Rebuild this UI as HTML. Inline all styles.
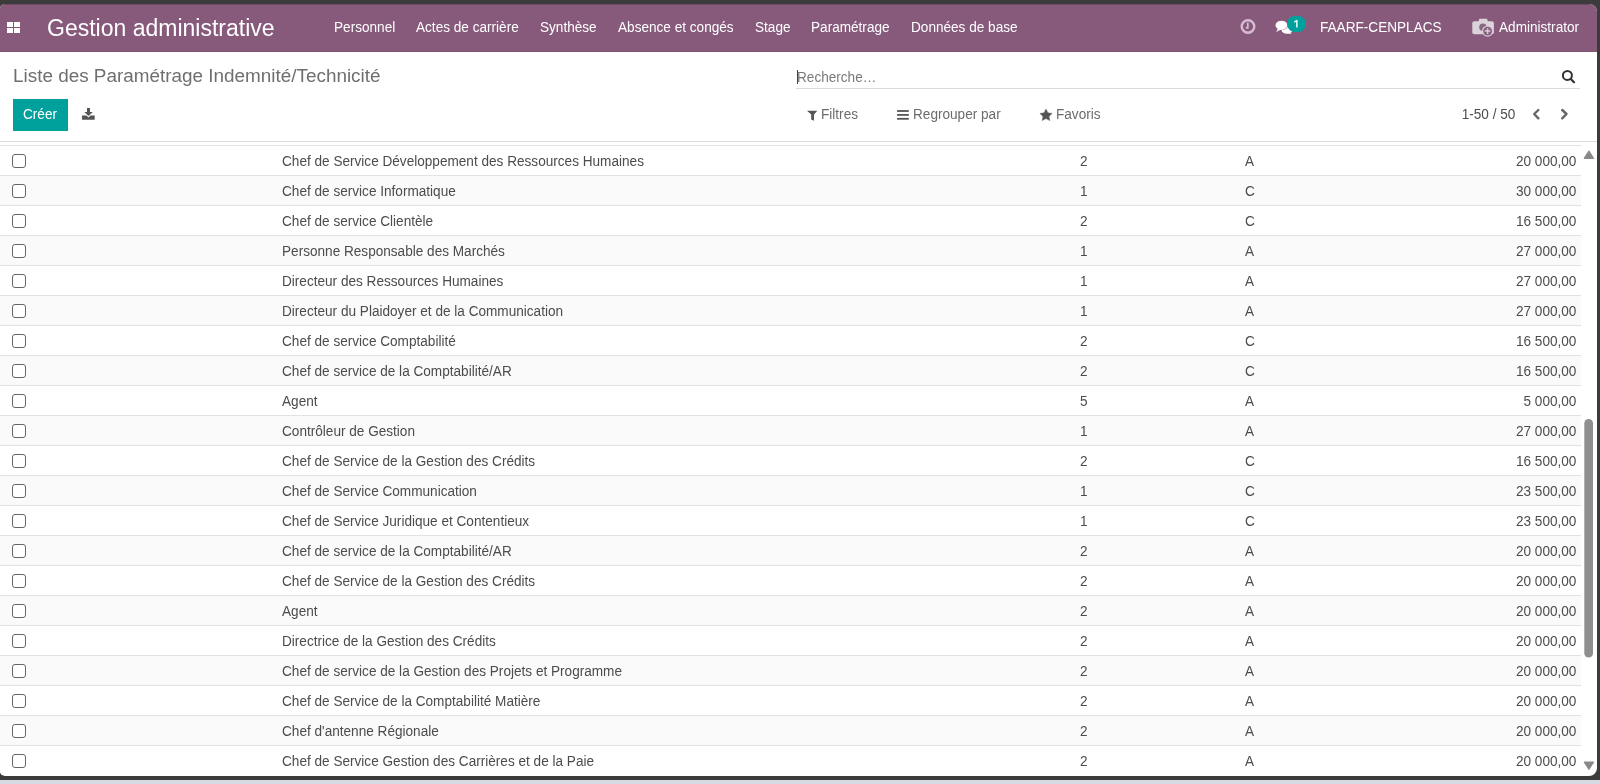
<!DOCTYPE html>
<html><head><meta charset="utf-8">
<style>
*{box-sizing:border-box}
html,body{margin:0;padding:0}
body{width:1600px;height:784px;overflow:hidden;position:relative;background:#d6d9e1;font-family:"Liberation Sans",sans-serif;}
#frame{position:absolute;left:0;top:0;width:1600px;height:780px;background:#3c3b3c}
#win{will-change:transform;position:absolute;left:0;top:4px;width:1597px;height:772px;background:#fff;border-radius:5px 8px 8px 5px;overflow:hidden}
#nav{position:absolute;left:0;top:0;width:1597px;height:48px;background:#875a7b;border-bottom:1px solid #7e5673;box-shadow:inset 0 1px 0 rgba(50,35,48,0.3)}
.t{position:absolute;white-space:nowrap;line-height:1}
.sy{transform:scaleY(1.08);transform-origin:0 7px}
.nv{color:#fff;font-size:13.6px;top:16.5px;transform:scaleY(1.08);transform-origin:0 7px}
#cp{position:absolute;left:0;top:48px;width:1597px;height:90px;border-bottom:1px solid #dcdcdc}
.rows{position:absolute;left:0;width:1581px}
.c.r{right:4.6px}
.row{position:absolute;left:0;width:1581px;height:30px;border-top:1px solid #e2e2e2}
.row.odd{background:#fff}
.row.even{background:#fafafa}
.cb{position:absolute;left:12px;top:8px;width:14px;height:14px;border:1.6px solid #666;border-radius:3px;background:#fff}
.c{position:absolute;font-size:13.6px;color:#4c4c4c;white-space:nowrap;line-height:1;top:8px;transform:scaleY(1.08);transform-origin:0 3px}
</style></head><body>
<div id="frame"></div>
<div id="win">
  <div id="nav">
    <svg style="position:absolute;left:7px;top:18px" width="13" height="11" viewBox="0 0 13 11"><rect x="0" y="0" width="6" height="5" fill="#fff"/><rect x="7" y="0" width="6" height="5" fill="#fff"/><rect x="0" y="6" width="6" height="5" fill="#fff"/><rect x="7" y="6" width="6" height="5" fill="#fff"/></svg>
    <div class="t" style="left:47px;top:13px;font-size:23px;color:#fff">Gestion administrative</div>
    <div class="t nv" style="left:334px">Personnel</div>
    <div class="t nv" style="left:416px">Actes de carrière</div>
    <div class="t nv" style="left:540px">Synthèse</div>
    <div class="t nv" style="left:618px">Absence et congés</div>
    <div class="t nv" style="left:755px">Stage</div>
    <div class="t nv" style="left:811px">Paramétrage</div>
    <div class="t nv" style="left:911px">Données de base</div>
    <div class="t nv" style="left:1320px">FAARF-CENPLACS</div>
    <div class="t nv" style="left:1499px">Administrator</div>
  </div>
  <div id="cp">
    <div class="t" style="left:13px;top:14.5px;font-size:18.9px;color:#6f6f6f">Liste des Paramétrage Indemnité/Technicité</div>
    <div style="position:absolute;left:13px;top:47px;width:55px;height:32px;background:#00a09d"></div>
    <div class="t sy" style="left:23px;top:56px;font-size:13.6px;color:#fff">Créer</div>
    <div class="t sy" style="left:797px;top:19px;font-size:13.6px;color:#7a7a7a">Recherche…</div>
    <div style="position:absolute;left:796px;top:36px;width:784px;height:1px;background:#dadada;border-radius:1px"></div>
    <div style="position:absolute;left:796.5px;top:17.5px;width:1.4px;height:14.5px;background:#444"></div>
    <div class="t sy" style="left:821px;top:56px;font-size:13.6px;color:#6c6c6c">Filtres</div>
    <div class="t sy" style="left:913px;top:56px;font-size:13.6px;color:#6c6c6c">Regrouper par</div>
    <div class="t sy" style="left:1056px;top:56px;font-size:13.6px;color:#6c6c6c">Favoris</div>
    <div class="t sy" style="left:1461.7px;top:56px;font-size:13.6px;color:#4c4c4c">1-50 / 50</div>
  </div>
  <div class="rows" style="top:141px">
<div class="row odd" style="top:0px"><div class="cb"></div><div class="c" style="left:282px">Chef de Service Développement des Ressources Humaines</div><div class="c" style="left:1080px">2</div><div class="c" style="left:1245px">A</div><div class="c r">20 000,00</div></div>
<div class="row even" style="top:30px"><div class="cb"></div><div class="c" style="left:282px">Chef de service Informatique</div><div class="c" style="left:1080px">1</div><div class="c" style="left:1245px">C</div><div class="c r">30 000,00</div></div>
<div class="row odd" style="top:60px"><div class="cb"></div><div class="c" style="left:282px">Chef de service Clientèle</div><div class="c" style="left:1080px">2</div><div class="c" style="left:1245px">C</div><div class="c r">16 500,00</div></div>
<div class="row even" style="top:90px"><div class="cb"></div><div class="c" style="left:282px">Personne Responsable des Marchés</div><div class="c" style="left:1080px">1</div><div class="c" style="left:1245px">A</div><div class="c r">27 000,00</div></div>
<div class="row odd" style="top:120px"><div class="cb"></div><div class="c" style="left:282px">Directeur des Ressources Humaines</div><div class="c" style="left:1080px">1</div><div class="c" style="left:1245px">A</div><div class="c r">27 000,00</div></div>
<div class="row even" style="top:150px"><div class="cb"></div><div class="c" style="left:282px">Directeur du Plaidoyer et de la Communication</div><div class="c" style="left:1080px">1</div><div class="c" style="left:1245px">A</div><div class="c r">27 000,00</div></div>
<div class="row odd" style="top:180px"><div class="cb"></div><div class="c" style="left:282px">Chef de service Comptabilité</div><div class="c" style="left:1080px">2</div><div class="c" style="left:1245px">C</div><div class="c r">16 500,00</div></div>
<div class="row even" style="top:210px"><div class="cb"></div><div class="c" style="left:282px">Chef de service de la Comptabilité/AR</div><div class="c" style="left:1080px">2</div><div class="c" style="left:1245px">C</div><div class="c r">16 500,00</div></div>
<div class="row odd" style="top:240px"><div class="cb"></div><div class="c" style="left:282px">Agent</div><div class="c" style="left:1080px">5</div><div class="c" style="left:1245px">A</div><div class="c r">5 000,00</div></div>
<div class="row even" style="top:270px"><div class="cb"></div><div class="c" style="left:282px">Contrôleur de Gestion</div><div class="c" style="left:1080px">1</div><div class="c" style="left:1245px">A</div><div class="c r">27 000,00</div></div>
<div class="row odd" style="top:300px"><div class="cb"></div><div class="c" style="left:282px">Chef de Service de la Gestion des Crédits</div><div class="c" style="left:1080px">2</div><div class="c" style="left:1245px">C</div><div class="c r">16 500,00</div></div>
<div class="row even" style="top:330px"><div class="cb"></div><div class="c" style="left:282px">Chef de Service Communication</div><div class="c" style="left:1080px">1</div><div class="c" style="left:1245px">C</div><div class="c r">23 500,00</div></div>
<div class="row odd" style="top:360px"><div class="cb"></div><div class="c" style="left:282px">Chef de Service Juridique et Contentieux</div><div class="c" style="left:1080px">1</div><div class="c" style="left:1245px">C</div><div class="c r">23 500,00</div></div>
<div class="row even" style="top:390px"><div class="cb"></div><div class="c" style="left:282px">Chef de service de la Comptabilité/AR</div><div class="c" style="left:1080px">2</div><div class="c" style="left:1245px">A</div><div class="c r">20 000,00</div></div>
<div class="row odd" style="top:420px"><div class="cb"></div><div class="c" style="left:282px">Chef de Service de la Gestion des Crédits</div><div class="c" style="left:1080px">2</div><div class="c" style="left:1245px">A</div><div class="c r">20 000,00</div></div>
<div class="row even" style="top:450px"><div class="cb"></div><div class="c" style="left:282px">Agent</div><div class="c" style="left:1080px">2</div><div class="c" style="left:1245px">A</div><div class="c r">20 000,00</div></div>
<div class="row odd" style="top:480px"><div class="cb"></div><div class="c" style="left:282px">Directrice de la Gestion des Crédits</div><div class="c" style="left:1080px">2</div><div class="c" style="left:1245px">A</div><div class="c r">20 000,00</div></div>
<div class="row even" style="top:510px"><div class="cb"></div><div class="c" style="left:282px">Chef de service de la Gestion des Projets et Programme</div><div class="c" style="left:1080px">2</div><div class="c" style="left:1245px">A</div><div class="c r">20 000,00</div></div>
<div class="row odd" style="top:540px"><div class="cb"></div><div class="c" style="left:282px">Chef de Service de la Comptabilité Matière</div><div class="c" style="left:1080px">2</div><div class="c" style="left:1245px">A</div><div class="c r">20 000,00</div></div>
<div class="row even" style="top:570px"><div class="cb"></div><div class="c" style="left:282px">Chef d'antenne Régionale</div><div class="c" style="left:1080px">2</div><div class="c" style="left:1245px">A</div><div class="c r">20 000,00</div></div>
<div class="row odd" style="top:600px"><div class="cb"></div><div class="c" style="left:282px">Chef de Service Gestion des Carrières et de la Paie</div><div class="c" style="left:1080px">2</div><div class="c" style="left:1245px">A</div><div class="c r">20 000,00</div></div>
  </div>
</div>

<div id="ic" style="position:absolute;left:0;top:0;width:1600px;height:784px;pointer-events:none">
  <!-- clock -->
  <svg style="position:absolute;left:1238px;top:17px" width="20" height="20" viewBox="0 0 20 20">
    <circle cx="10" cy="9.5" r="6.3" fill="none" stroke="#d7bdd2" stroke-width="2.4"/>
    <path d="M9.8 5.6 V10.8 H7.8" fill="none" stroke="#d7bdd2" stroke-width="1.7"/>
  </svg>
  <!-- chat -->
  <svg style="position:absolute;left:1274px;top:18px" width="20" height="18" viewBox="0 0 20 18">
    <ellipse cx="13" cy="12.2" rx="5.3" ry="3.6" fill="#fff"/>
    <path d="M15 14 L18 16 L13.5 15.2 Z" fill="#fff"/>
    <ellipse cx="7.5" cy="7.3" rx="6.5" ry="5" fill="#875a7b"/>
    <ellipse cx="7.5" cy="7.3" rx="6" ry="4.6" fill="#fff"/>
    <path d="M4 10.5 L2.2 14 L7 11.5 Z" fill="#fff"/>
  </svg>
  <!-- badge -->
  <div style="position:absolute;left:1287.2px;top:15.7px;width:18.5px;height:16.6px;border-radius:9px;background:#00a09d"></div>
  <svg style="position:absolute;left:1290px;top:18px" width="12" height="12" viewBox="0 0 12 12"><path d="M6.9 2.3 V9.6" stroke="#e8ffff" stroke-width="1.5"/><path d="M6.9 2.3 L4.1 4.3" stroke="#e8ffff" stroke-width="1.3"/></svg>
  <!-- avatar -->
  <svg style="position:absolute;left:1470px;top:16px" width="26" height="22" viewBox="0 0 26 22">
    <rect x="2.3" y="5.3" width="21.6" height="13" rx="2" fill="#dad3d9"/>
    <path d="M8.3 6 L9.3 2.8 H17 L18 6 Z" fill="#dad3d9"/>
    <circle cx="12.9" cy="11.3" r="3.7" fill="#866a80"/>
    <circle cx="17.6" cy="15.1" r="5.6" fill="#e3c4df"/>
    <circle cx="17.6" cy="15.1" r="4.4" fill="#7d6577"/>
    <path d="M17.6 12.3 V17.9 M14.8 15.1 H20.4" stroke="#e3c4df" stroke-width="1.5"/>
  </svg>
  <!-- download -->
  <svg style="position:absolute;left:80px;top:106px" width="18" height="16" viewBox="0 0 18 16">
    <rect x="7" y="2" width="3" height="5" fill="#555"/>
    <path d="M4.3 6 H12.8 L8.5 10 Z" fill="#555"/>
    <path d="M2 9.5 H6.5 L8.5 11.5 L10.5 9.5 H14.7 V13.8 H2 Z" fill="#555"/>
  </svg>
  <!-- funnel -->
  <svg style="position:absolute;left:805px;top:108.6px" width="15" height="14" viewBox="0 0 15 14">
    <path d="M2 1.7 H12.3 L9 5.5 V11.8 L6.2 10.5 V5.5 Z" fill="#555"/>
  </svg>
  <!-- hamburger -->
  <svg style="position:absolute;left:895px;top:108px" width="16" height="14" viewBox="0 0 16 14">
    <rect x="2.1" y="2.1" width="11.7" height="1.8" fill="#555"/>
    <rect x="2.1" y="6" width="11.7" height="1.8" fill="#555"/>
    <rect x="2.1" y="9.9" width="11.7" height="1.8" fill="#555"/>
  </svg>
  <!-- star -->
  <svg style="position:absolute;left:1037.8px;top:106.8px" width="16" height="16" viewBox="0 0 16 16">
    <path d="M8.00 2.00 L9.88 5.81 L14.09 6.42 L11.04 9.39 L11.76 13.58 L8.00 11.60 L4.24 13.58 L4.96 9.39 L1.91 6.42 L6.12 5.81 Z" fill="#555" stroke="#555" stroke-width="0.4" stroke-linejoin="round"/>
  </svg>
  <!-- search -->
  <svg style="position:absolute;left:1560px;top:68px" width="18" height="18" viewBox="0 0 18 18">
    <circle cx="7.4" cy="7.4" r="4.5" fill="none" stroke="#333" stroke-width="2"/>
    <path d="M10.6 10.8 L14 14.2" stroke="#333" stroke-width="2.2" stroke-linecap="round"/>
  </svg>
  <!-- pager -->
  <svg style="position:absolute;left:1528px;top:105px" width="46" height="18" viewBox="0 0 46 18">
    <path d="M10.4 5 L6.2 9 L10.4 13.3" fill="none" stroke="#666" stroke-width="2.4" stroke-linecap="round" stroke-linejoin="round"/>
    <path d="M34.2 5 L38.5 9 L34.2 13.3" fill="none" stroke="#666" stroke-width="2.4" stroke-linecap="round" stroke-linejoin="round"/>
  </svg>
  <!-- scrollbar -->
  <svg style="position:absolute;left:1581px;top:145px" width="16" height="631" viewBox="0 0 16 631">
    <path d="M3 13.4 L12.8 13.4 L7.9 5.8 Z" fill="#888" stroke="#888" stroke-width="1" stroke-linejoin="round"/>
    <rect x="3.3" y="274" width="8.7" height="238.6" rx="4.35" fill="#8f8f8f"/>
    <path d="M3 617 L12.8 617 L7.9 624.6 Z" fill="#888" stroke="#888" stroke-width="1" stroke-linejoin="round"/>
  </svg>
</div>
</body></html>
